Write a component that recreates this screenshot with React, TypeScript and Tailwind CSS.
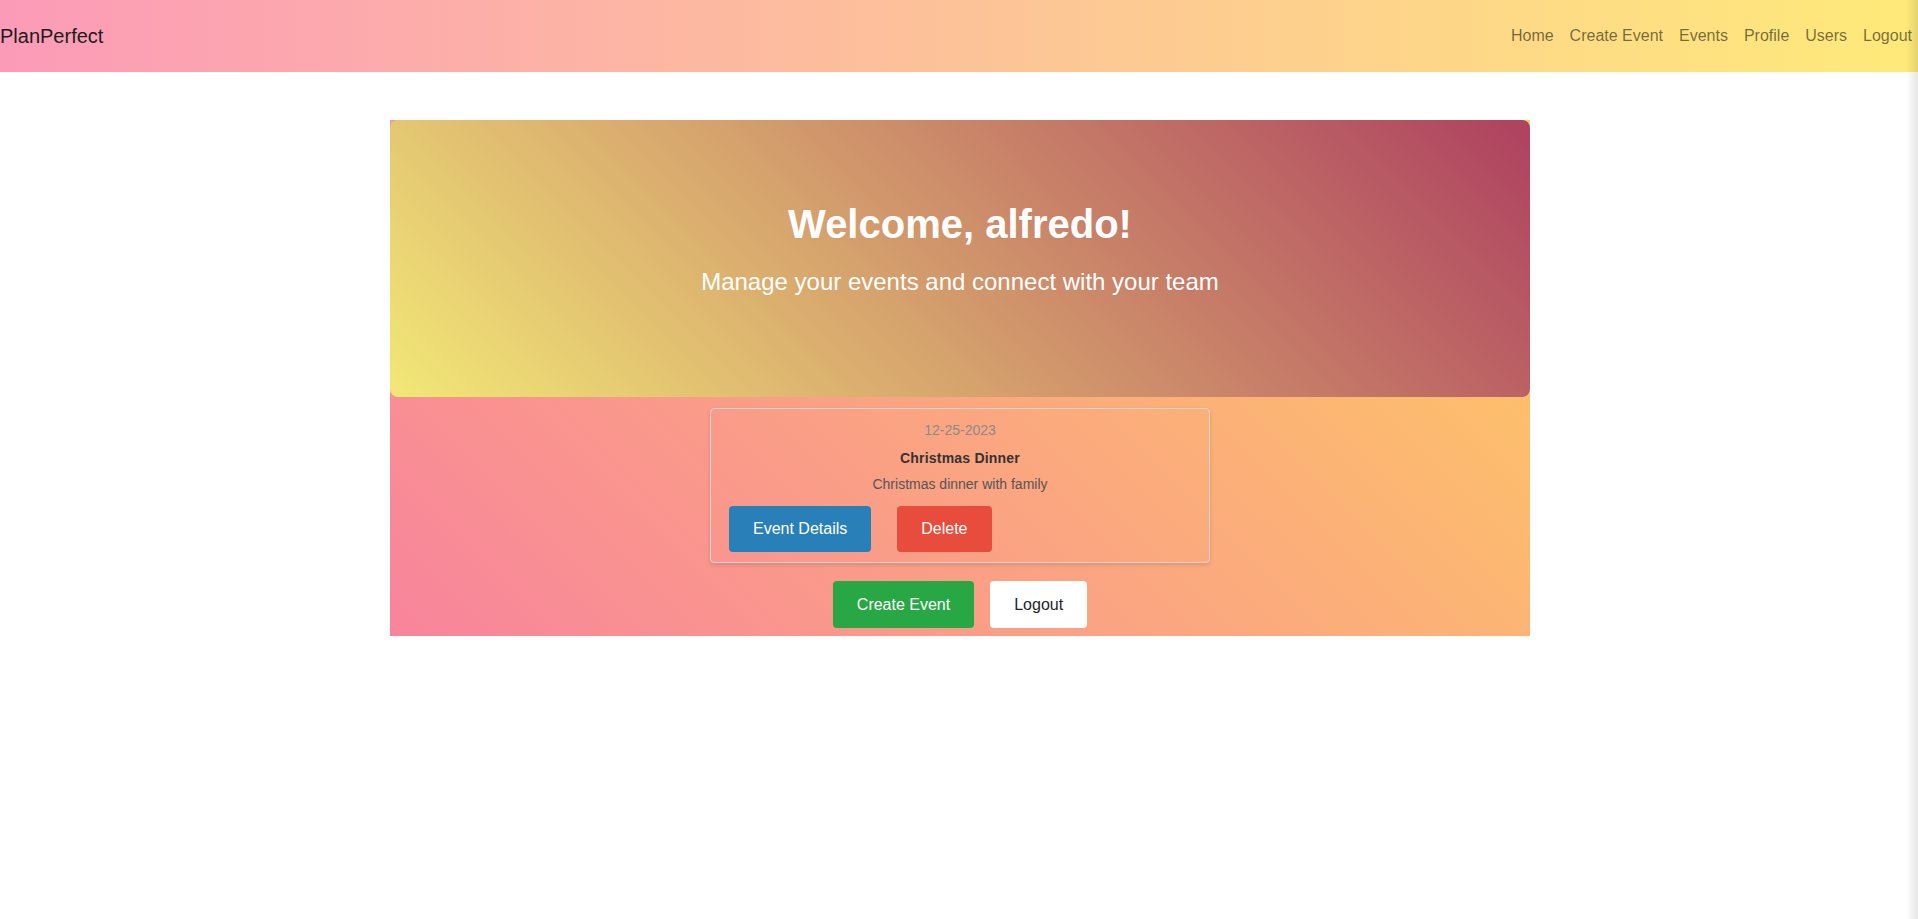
import React from 'react';

const navLinks = ['Home', 'Create Event', 'Events', 'Profile', 'Users', 'Logout'];

const Navbar: React.FC = () => (
  <nav className="flex h-[72px] items-center justify-between bg-[linear-gradient(to_right,#fc9bb8,#feea79)]">
    <a className="text-[20px] leading-[30px] text-[#1c1c1c]">PlanPerfect</a>
    <ul className="mr-[-2px] flex items-center">
      {navLinks.map((link) => (
        <li key={link}>
          <a className="block px-2 text-[16px] leading-6 text-black/55">{link}</a>
        </li>
      ))}
    </ul>
  </nav>
);

const EventCard: React.FC = () => (
  <div className="w-[500px] rounded-[4px] border border-[#d6d6d6] shadow-[0_2px_4px_rgba(0,0,0,0.12)] pt-[11px] pb-[10px]">
    <p className="text-center text-[14px] leading-[21px] text-[#8a8a8a]">12-25-2023</p>
    <h5 className="mt-[7px] text-center text-[14px] font-bold leading-[21px] tracking-[0.2px] text-[#333]">
      Christmas Dinner
    </h5>
    <p className="mt-[5px] text-center text-[14px] leading-[21px] text-[#555]">Christmas dinner with family</p>
    <div className="mt-[11px] flex gap-[26px] pl-[18px]">
      <button className="h-[46px] rounded-[4px] bg-[#2980b9] px-6 text-[16px] text-white">Event Details</button>
      <button className="h-[46px] rounded-[4px] bg-[#e74c3c] px-6 text-[16px] text-white">Delete</button>
    </div>
  </div>
);

export default function App() {
  return (
    <div className="relative min-h-[919px] bg-white font-['Liberation_Sans',Arial,sans-serif]">
      <Navbar />
      <div className="pl-[2px]">
        <main className="mx-auto mt-[48px] w-[1140px]">
          <section className="flex flex-col items-center bg-[linear-gradient(45deg,#f8849c,#fecb62)] pb-[8px]">
            <div className="w-full rounded-lg bg-[linear-gradient(45deg,#f2e876,#ae4160)] pt-[80px] pb-[97px] text-center text-white">
              <h1 className="text-[40px] font-bold leading-[48px]">Welcome, alfredo!</h1>
              <p className="mt-[16px] text-[24px] leading-[36px]">Manage your events and connect with your team</p>
            </div>
            <div className="mt-[11px]">
              <EventCard />
            </div>
            <div className="mt-[18px] flex gap-4">
              <button className="h-[47px] rounded-[4px] bg-[#28a745] px-6 text-[16px] text-white">Create Event</button>
              <button className="h-[47px] rounded-[4px] bg-white px-6 text-[16px] text-[#212529]">Logout</button>
            </div>
          </section>
        </main>
      </div>
      <div className="pointer-events-none fixed top-0 right-0 h-full w-[12px] bg-gradient-to-r from-transparent to-black/10" />
    </div>
  );
}
